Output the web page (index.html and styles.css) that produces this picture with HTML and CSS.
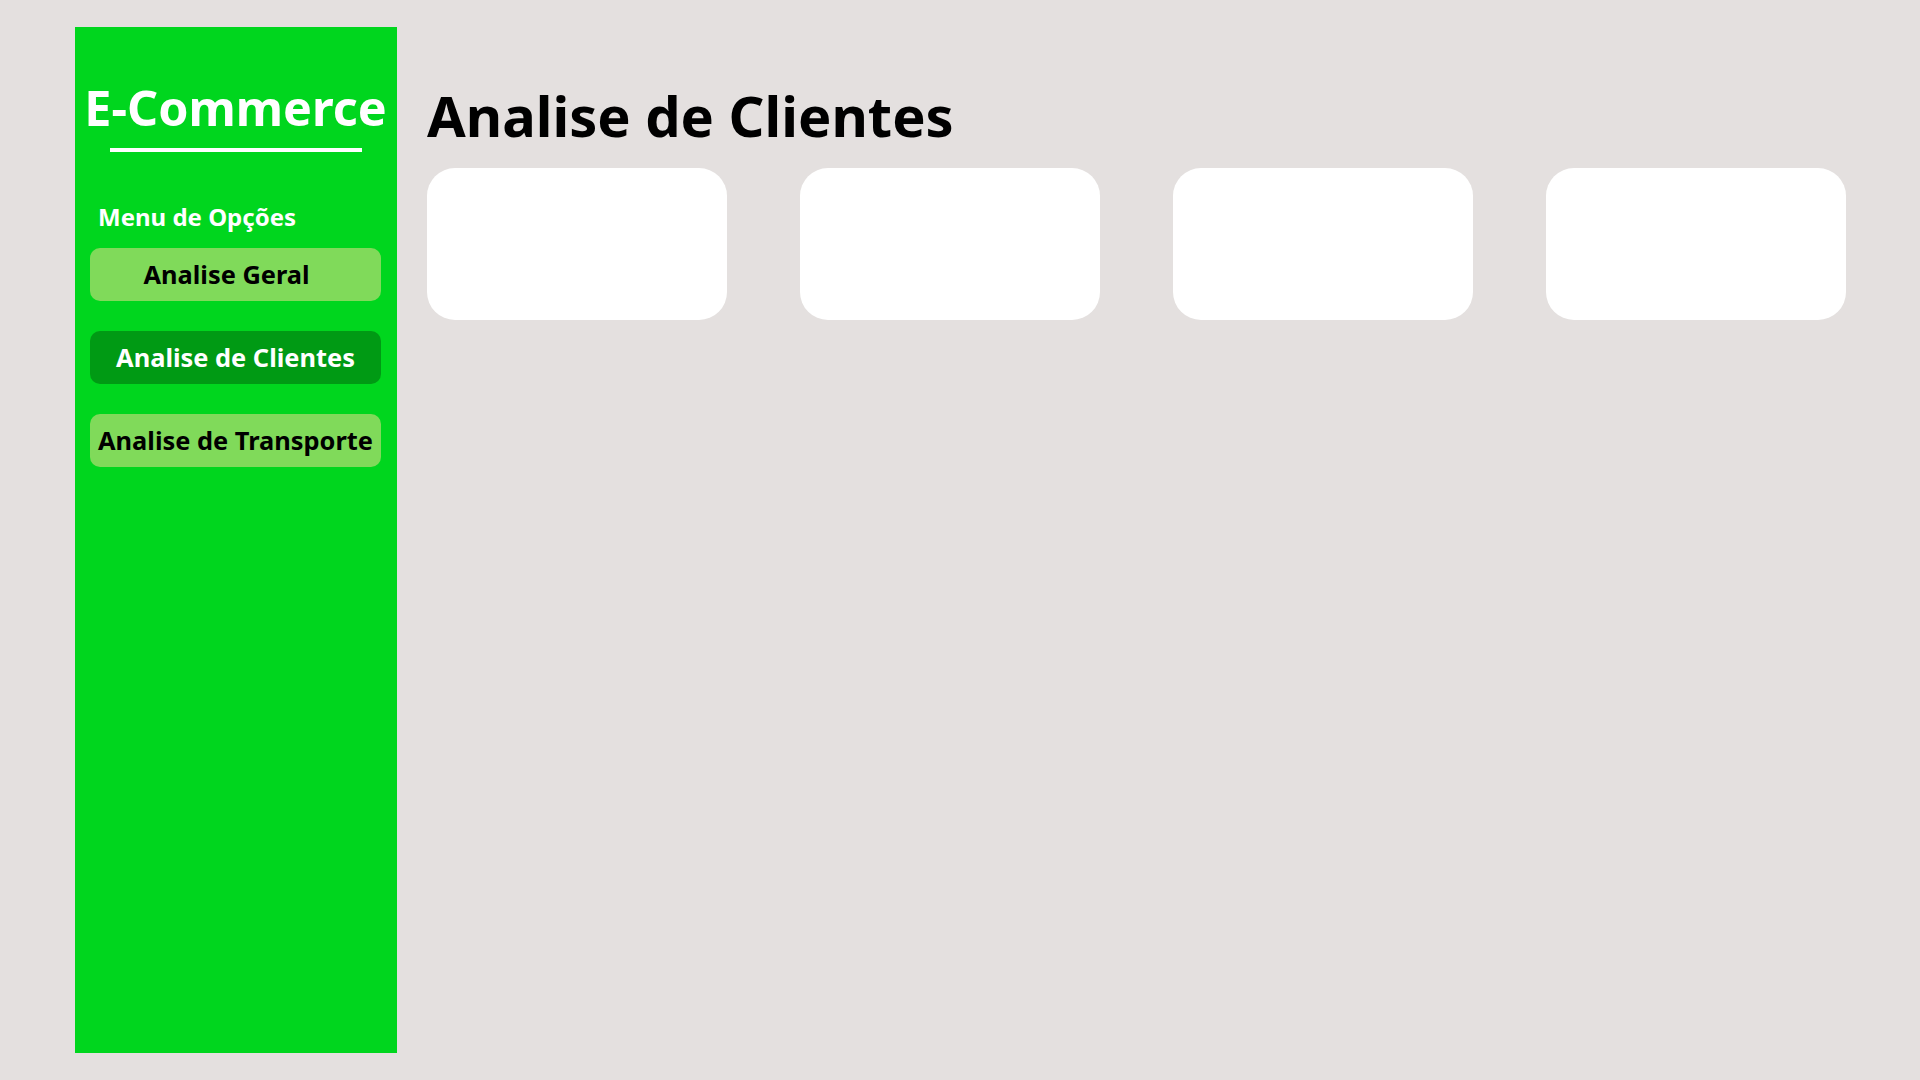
FILE: index.html
```html
<!DOCTYPE html>
<html lang="pt-BR">
<head>
    <meta charset="UTF-8">
    <title>E-Commerce - Analise de Clientes</title>
    <link rel="stylesheet" href="styles.css">
</head>
<body>

<div class="page">
    <!--Menu lateral-->
    <div class="sidebar">
        <h1 class="logo">E-Commerce</h1>
        <div class="logoLine"></div>

        <p class="menuTitle">Menu de Opções</p>
        <a class="menuButton menuGeral" href="#">Analise Geral</a>
        <a class="menuButton active" href="#">Analise de Clientes</a>
        <a class="menuButton" href="#">Analise de Transporte</a>
    </div>

    <!--Area principal-->
    <div class="content">
        <h2 class="pageTitle">Analise de Clientes</h2>

        <div class="cards">
            <div class="card"></div>
            <div class="card"></div>
            <div class="card"></div>
            <div class="card"></div>
        </div>
    </div>
</div>

</body>
</html>
```

FILE: styles.css
```css
/*CSS for whole page*/
body {
    margin: 0;
    background-color: #e4e0df;
    font-family: "Noto Sans", "Open Sans", sans-serif;
}

.page {
    display: flex;
    gap: 30px;
    padding: 27px 0 0 75px;
}

/*CSS for the green menu*/
.sidebar {
    display: flex;
    flex-direction: column;
    box-sizing: border-box;
    width: 322px;
    height: 1026px;
    padding: 50px 16px 0 15px;
    background-color: #00d61e;
}

.logo {
    margin: 0 -20px;
    font-size: 48.5px;
    line-height: 60px;
    font-weight: 700;
    color: white;
    text-align: center;
    white-space: nowrap;
}

.logoLine {
    width: 252px;
    height: 4px;
    margin: 11px auto 0 auto;
    background-color: white;
}

.menuTitle {
    margin: 50px 0 16px 8px;
    font-size: 24px;
    line-height: 30px;
    font-weight: 700;
    color: white;
}

.menuButton {
    display: block;
    height: 53px;
    margin-bottom: 30px;
    border-radius: 10px;
    background-color: #80da5a;
    color: black;
    font-size: 25.4px;
    line-height: 53px;
    font-weight: 700;
    text-align: center;
    text-decoration: none;
    white-space: nowrap;
}

.menuGeral {
    padding-right: 18px;
}

.menuButton.active {
    background-color: #009a14;
    color: white;
}

/*CSS for the main area*/
.content {
    display: flex;
    flex-direction: column;
}

.pageTitle {
    margin: 59px 0 24px 0;
    font-size: 56px;
    line-height: 58px;
    font-weight: 700;
    color: black;
}

.cards {
    display: flex;
    gap: 73px;
}

.card {
    width: 300px;
    height: 152px;
    border-radius: 28px;
    background-color: white;
}
```
